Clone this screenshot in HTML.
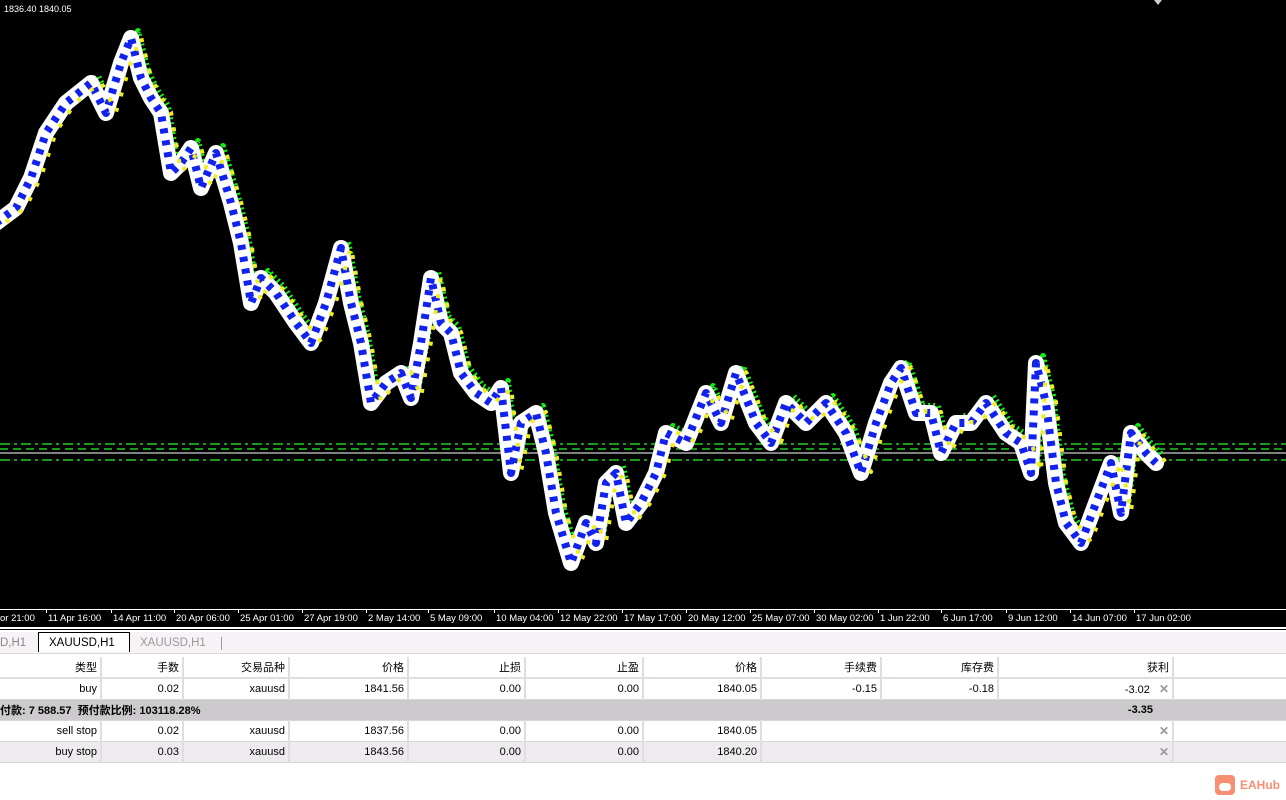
<!DOCTYPE html>
<html><head><meta charset="utf-8"><style>
*{margin:0;padding:0;box-sizing:border-box}
body{width:1286px;height:800px;background:#fff;position:relative;overflow:hidden;font-family:"Liberation Sans","Noto Sans CJK SC",sans-serif;font-size:11px;color:#000}
#chart{position:absolute;left:0;top:0;width:1286px;height:630px;background:#000}
.ax{position:absolute;top:613px;color:#fff;font-size:9.5px;white-space:nowrap}
.tk{position:absolute;top:609px;width:1px;height:4px;background:#fff}
#tabs{position:absolute;top:632px;left:0;width:1286px;height:22px;background:#f6f2f6;border-bottom:1px solid #ddd}
.tab{position:absolute;top:1px;height:20px;line-height:20px;font-size:11.5px}
table{position:absolute;top:657px;left:0;border-collapse:collapse;font-size:11px}
td{height:21px;text-align:right;padding:0 3px;border-right:2px solid #e0dde0;border-bottom:1px solid #d8d5d8;white-space:nowrap}
tr.h td{border-bottom:2px solid #e0dde0}
tr.s td{background:#cccacc;border-right:none;font-weight:bold}
tr.g td{background:#eeebee}
.x{color:#999;font-weight:bold;font-size:12px;padding-left:6px}
</style></head><body>
<div id="chart">
<svg width="1286" height="610" style="position:absolute;left:0;top:0">
<defs>
<polyline id="p" points="0,220 20,205 35,175 50,130 70,100 95,80 110,110 125,60 135,35 145,75 155,95 165,110 175,170 185,160 195,145 205,185 220,150 235,200 245,240 255,300 265,275 280,290 300,320 315,340 330,300 345,245 355,300 365,340 375,400 390,380 405,370 415,395 425,340 435,275 445,320 455,330 465,370 480,390 495,400 505,385 515,470 525,420 540,410 550,450 560,510 575,560 590,520 600,540 610,480 620,470 630,520 645,500 660,470 670,430 690,440 710,390 725,420 740,370 760,420 775,440 790,400 810,420 830,400 850,430 865,470 880,420 895,380 905,365 920,410 935,410 945,450 960,420 975,420 990,400 1010,430 1025,440 1035,470 1040,360 1050,400 1060,480 1070,520 1085,540 1100,500 1115,460 1125,510 1135,430 1150,450 1160,460" fill="none" stroke-linejoin="round"/>
</defs>
<line x1="0" y1="444" x2="1286" y2="444" stroke="#2c2" stroke-width="1.5" stroke-dasharray="10 4 3 4"/>
<line x1="0" y1="449" x2="1286" y2="449" stroke="#2c2" stroke-width="1.5" stroke-dasharray="8 5"/>
<line x1="0" y1="453" x2="1286" y2="453" stroke="#aaa" stroke-width="1.5"/>
<line x1="0" y1="460" x2="1286" y2="460" stroke="#2c2" stroke-width="1.5" stroke-dasharray="10 4 3 4"/>
<use href="#p" transform="translate(3,-4)" stroke="#1e1" stroke-width="6" stroke-dasharray="2 3"/>
<use href="#p" transform="translate(-4,3)" stroke="#fff" stroke-width="16" stroke-linecap="round"/>
<use href="#p" transform="translate(-4,3)" stroke="#12e" stroke-width="8" stroke-dasharray="5 7" stroke-linecap="butt"/>
<use href="#p" transform="translate(6,2)" stroke="#ee2" stroke-width="4" stroke-dasharray="4 12"/>
<polygon points="1154,0 1162,0 1158,5" fill="#ccc"/>
</svg>
<div style="position:absolute;left:4px;top:4px;color:#fff;font-size:9px">1836.40 1840.05</div>
<div style="position:absolute;left:0;top:609px;width:1286px;height:1px;background:#fff"></div>
<div class="ax" style="left:0">or 21:00</div>
<div class="tk" style="left:46px"></div><div class="ax" style="left:48px">11 Apr 16:00</div>
<div class="tk" style="left:111px"></div><div class="ax" style="left:113px">14 Apr 11:00</div>
<div class="tk" style="left:174px"></div><div class="ax" style="left:176px">20 Apr 06:00</div>
<div class="tk" style="left:238px"></div><div class="ax" style="left:240px">25 Apr 01:00</div>
<div class="tk" style="left:302px"></div><div class="ax" style="left:304px">27 Apr 19:00</div>
<div class="tk" style="left:366px"></div><div class="ax" style="left:368px">2 May 14:00</div>
<div class="tk" style="left:428px"></div><div class="ax" style="left:430px">5 May 09:00</div>
<div class="tk" style="left:494px"></div><div class="ax" style="left:496px">10 May 04:00</div>
<div class="tk" style="left:558px"></div><div class="ax" style="left:560px">12 May 22:00</div>
<div class="tk" style="left:622px"></div><div class="ax" style="left:624px">17 May 17:00</div>
<div class="tk" style="left:686px"></div><div class="ax" style="left:688px">20 May 12:00</div>
<div class="tk" style="left:750px"></div><div class="ax" style="left:752px">25 May 07:00</div>
<div class="tk" style="left:814px"></div><div class="ax" style="left:816px">30 May 02:00</div>
<div class="tk" style="left:878px"></div><div class="ax" style="left:880px">1 Jun 22:00</div>
<div class="tk" style="left:941px"></div><div class="ax" style="left:943px">6 Jun 17:00</div>
<div class="tk" style="left:1006px"></div><div class="ax" style="left:1008px">9 Jun 12:00</div>
<div class="tk" style="left:1070px"></div><div class="ax" style="left:1072px">14 Jun 07:00</div>
<div class="tk" style="left:1134px"></div><div class="ax" style="left:1136px">17 Jun 02:00</div>
<div style="position:absolute;left:0;top:627px;width:1286px;height:2px;background:#fff"></div>
</div>
<div id="tabs">
<div class="tab" style="left:0;color:#888">D,H1</div>
<div class="tab" style="left:38px;width:92px;background:#fff;border-left:1px solid #000;border-right:1px solid #000;border-top:1px solid #000;padding-left:10px;top:0">XAUUSD,H1</div>
<div class="tab" style="left:140px;color:#999">XAUUSD,H1</div>
<div style="position:absolute;left:221px;top:5px;width:1px;height:13px;background:#999"></div>
</div>
<table>
<tr class="h"><td style="width:101px">类型</td><td style="width:82px">手数</td><td style="width:106px">交易品种</td><td style="width:119px">价格</td><td style="width:117px">止损</td><td style="width:118px">止盈</td><td style="width:118px">价格</td><td style="width:120px">手续费</td><td style="width:117px">库存费</td><td style="width:175px">获利</td><td style="width:113px;border-right:none"></td></tr>
<tr><td>buy</td><td>0.02</td><td>xauusd</td><td>1841.56</td><td>0.00</td><td>0.00</td><td>1840.05</td><td>-0.15</td><td>-0.18</td><td>-3.02 <span class="x">✕</span></td><td style="border-right:none"></td></tr>
<tr class="s"><td colspan="9" style="text-align:left;padding-left:0">付款: 7 588.57&nbsp; 预付款比例: 103118.28%</td><td style="padding-right:20px">-3.35</td><td></td></tr>
<tr><td>sell stop</td><td>0.02</td><td>xauusd</td><td>1837.56</td><td>0.00</td><td>0.00</td><td>1840.05</td><td style="border-right:none"></td><td style="border-right:none"></td><td><span class="x">✕</span></td><td style="border-right:none"></td></tr>
<tr class="g"><td>buy stop</td><td>0.03</td><td>xauusd</td><td>1843.56</td><td>0.00</td><td>0.00</td><td>1840.20</td><td style="border-right:none"></td><td style="border-right:none"></td><td><span class="x">✕</span></td><td style="border-right:none"></td></tr>
</table>
<div style="position:absolute;left:1215px;top:775px;width:20px;height:20px;border-radius:4px;background:#f98f72"><div style="position:absolute;left:4px;top:8px;width:12px;height:8px;border-radius:4px;background:#fff"></div></div>
<div style="position:absolute;left:1240px;top:778px;color:#f98f72;font-weight:bold;font-size:12px">EAHub</div>
</body></html>
